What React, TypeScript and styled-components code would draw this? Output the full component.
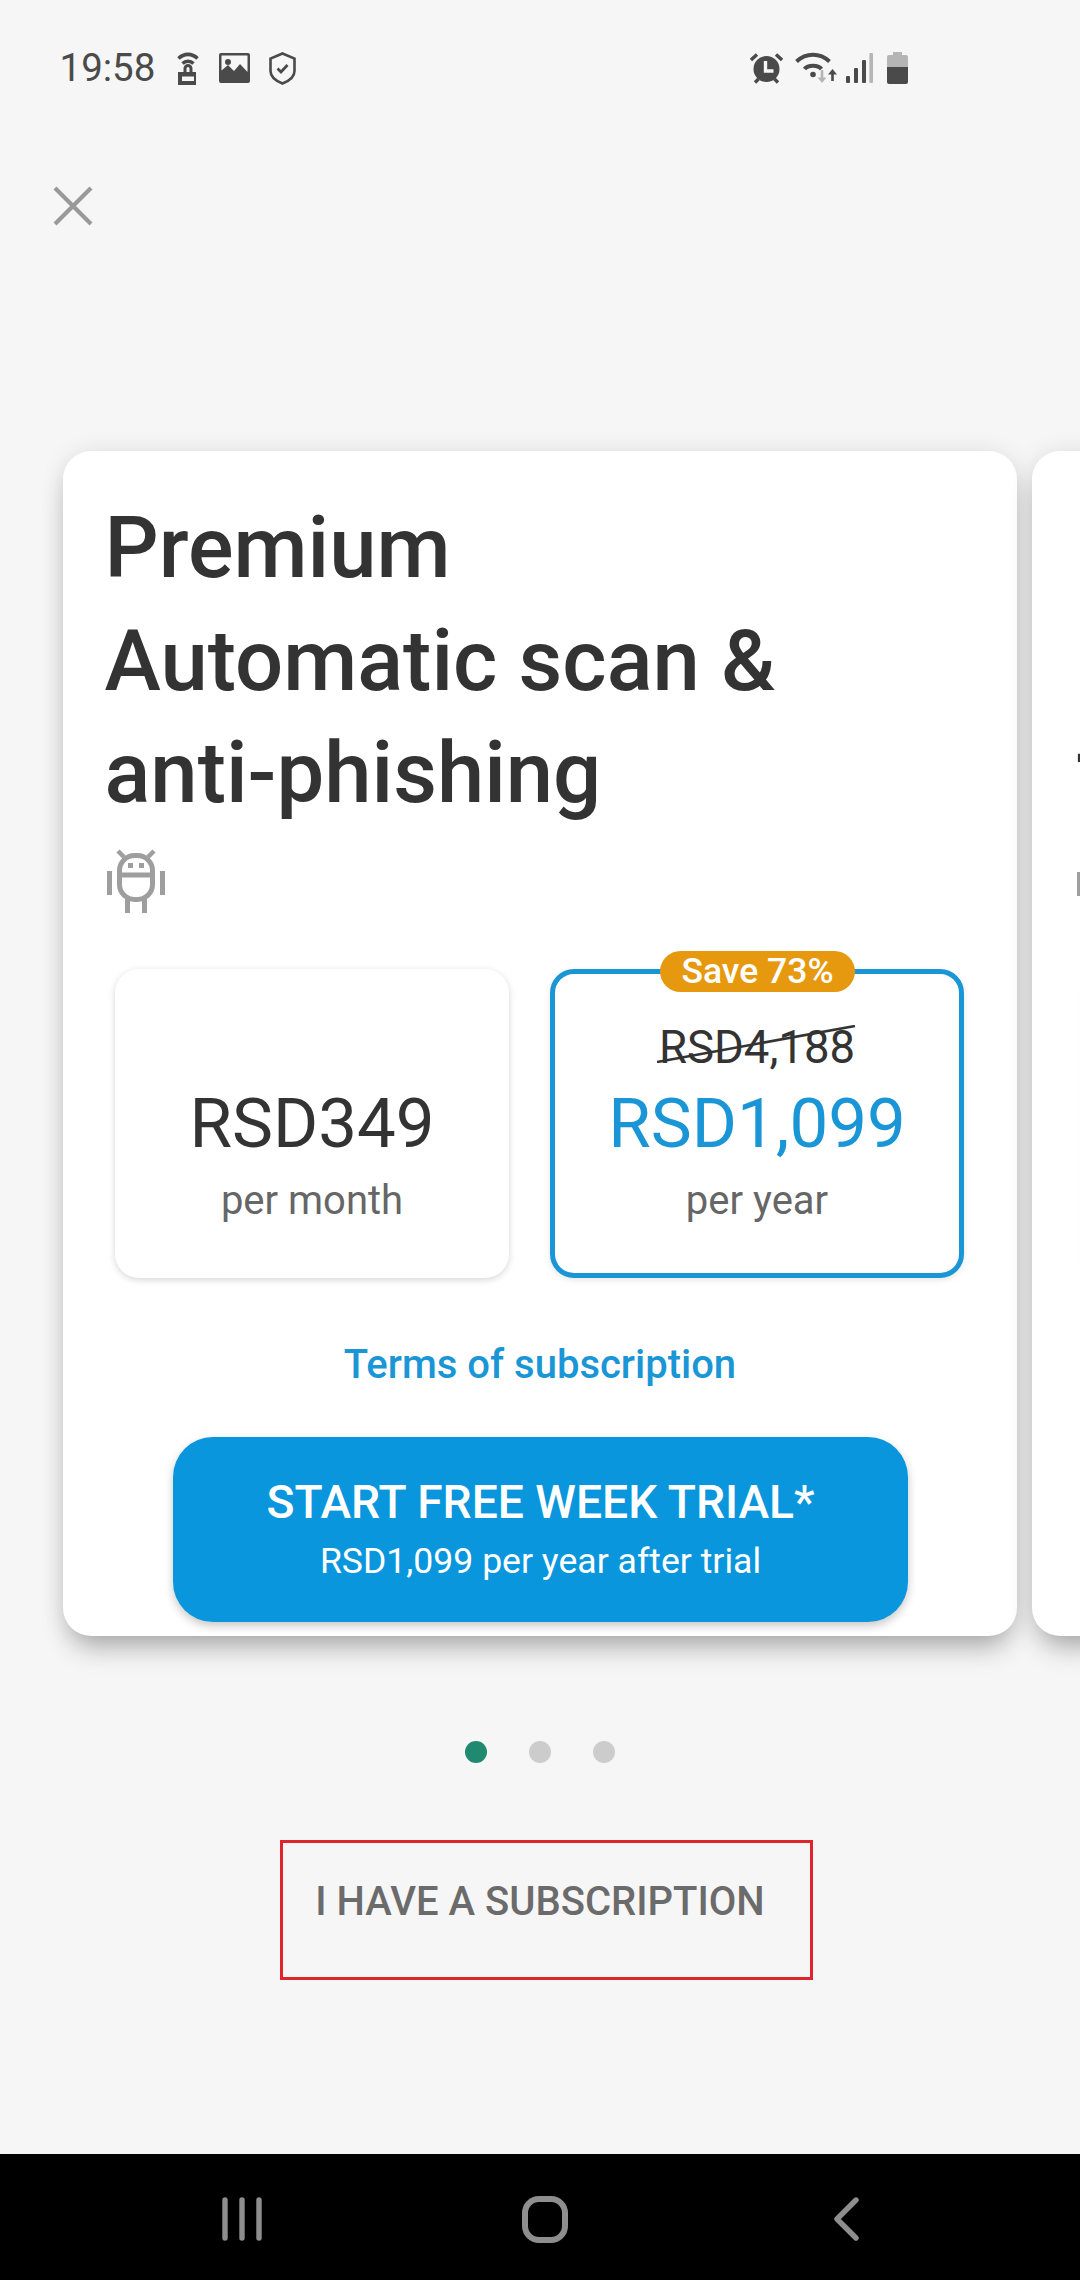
import styled, { createGlobalStyle } from "styled-components";

const GlobalStyle = createGlobalStyle`
  html, body {
    margin: 0;
    padding: 0;
    background: #f6f6f6;
  }
  * {
    box-sizing: border-box;
  }
`

const Screen = styled.div`
  position: relative;
  width: 1080px;
  height: 2280px;
  overflow: hidden;
  background: #f6f6f6;
  font-family: Roboto, "Liberation Sans", sans-serif;
  display: flex;
  flex-direction: column;
`

const StatusBar = styled.div`
  height: 136px;
  padding: 50px 172px 0 59.5px;
  display: flex;
  justify-content: space-between;
  align-items: flex-start;
`

const StatusGroup = styled.div<{ $gap: number }>`
  display: flex;
  align-items: center;
  gap: ${p => p.$gap}px;
  height: 36px;
`

const StatusSlot = styled.span<{ $after: number }>`
  display: flex;
  margin-right: ${p => p.$after}px;
`

const Time = styled.span`
  font-size: 38.5px;
  line-height: 36px;
  color: #4a4a4a;
  margin-right: 2px;
`

const CloseButton = styled.div`
  margin: 50px 0 0 53px;
  width: 40px;
  height: 40px;
  display: flex;
`

const Carousel = styled.div`
  margin-top: 225px;
  padding-left: 63px;
  display: flex;
  gap: 15px;
  width: 1080px;
`

const Card = styled.div`
  flex: none;
  width: 954px;
  height: 1185px;
  background: #fff;
  border-radius: 28px;
  box-shadow: 0 18px 28px -8px rgba(0, 0, 0, 0.3), 0 0 24px rgba(0, 0, 0, 0.09);
  padding: 41px 43px 0;
  display: flex;
  flex-direction: column;
`

const PeekCard = styled(Card)`
  padding: 278px 0 0 44px;
  overflow: hidden;
`

const Title = styled.h1`
  margin: 0 0 0 -1.5px;
  font-size: 85px;
  line-height: 112.5px;
  font-weight: 500;
  color: #333;
`

const PlatformIcon = styled.div`
  margin-top: 19px;
  height: 64px;
`

const PeekPlatformIcon = styled(PlatformIcon)`
  margin-top: 9px;
`

const Plans = styled.div`
  margin: 56px 10px 0 9px;
  display: flex;
  gap: 41px;
  align-items: stretch;
`

const Plan = styled.div<{ $selected?: boolean }>`
  position: relative;
  height: 309px;
  flex: ${p => (p.$selected ? "0 0 414px" : "0 0 394px")};
  border-radius: 24px;
  background: #fff;
  border: ${p => (p.$selected ? "5px solid #1a96d6" : "none")};
  box-shadow: ${p => (p.$selected ? "0 2px 6px rgba(0, 0, 0, 0.1)" : "0 2px 7px rgba(0, 0, 0, 0.16)")};
  display: flex;
  flex-direction: column;
  align-items: center;
  padding-top: ${p => (p.$selected ? "48px" : "111px")};
`

const Badge = styled.div`
  position: absolute;
  top: -23px;
  left: 105px;
  width: 195px;
  height: 41px;
  border-radius: 21px;
  background: #e6990f;
  color: #fff;
  font-size: 35.5px;
  font-weight: 500;
  line-height: 40px;
  text-align: center;
`

const OldPrice = styled.div`
  position: relative;
  margin-bottom: 6px;
  font-size: 45.5px;
  line-height: 52px;
  color: #333;
`

const StrikeLine = styled.svg`
  position: absolute;
  left: -2px;
  top: 3px;
`

const Price = styled.div<{ $accent?: boolean }>`
  margin-top: 3px;
  font-size: 69px;
  line-height: 81px;
  color: ${p => (p.$accent ? "#1a96d6" : "#333")};
`

const Period = styled.div`
  margin-top: 13px;
  font-size: 40px;
  line-height: 47px;
  color: #666;
`

const TermsLink = styled.div`
  margin-top: 63px;
  text-align: center;
  font-size: 40px;
  line-height: 47px;
  font-weight: 500;
  color: #1a96d6;
`

const TrialButton = styled.div`
  margin: 49px 66px 0 67px;
  height: 185px;
  border-radius: 40px;
  background: #0a96dc;
  box-shadow: 0 4px 10px rgba(0, 0, 0, 0.22);
  color: #fff;
  display: flex;
  flex-direction: column;
  align-items: center;
  padding-top: 39px;
`

const TrialTitle = styled.div`
  font-size: 46.2px;
  line-height: 53px;
  font-weight: 500;
`

const TrialNote = styled.div`
  margin-top: 12px;
  font-size: 35.6px;
  line-height: 41px;
`

const PeekLetter = styled.div`
  font-size: 85px;
  line-height: 112px;
  font-weight: 500;
  color: #333;
`

const Dots = styled.div`
  margin-top: 105px;
  display: flex;
  justify-content: center;
  gap: 42px;
`

const Dot = styled.div<{ $active?: boolean }>`
  width: 22px;
  height: 22px;
  border-radius: 50%;
  background: ${p => (p.$active ? "#1f8a70" : "#ccc")};
`

const RestoreLink = styled.div`
  margin-top: 116px;
  text-align: center;
  font-size: 40px;
  line-height: 46px;
  font-weight: 500;
  color: #6b6b6b;
`

const AnnotationBox = styled.div`
  position: absolute;
  left: 280px;
  top: 1840px;
  width: 533px;
  height: 140px;
  border: 3px solid #e0242f;
`

const NavBar = styled.div`
  margin-top: auto;
  height: 126px;
  background: #000;
  display: flex;
  align-items: center;
  padding: 4px 221px 0 221px;
  justify-content: space-between;
`

const HomeSlot = styled.div`
  display: flex;
  margin-right: 8px;
`

function HotspotIcon() {
  return (
    <svg width="24" height="34" viewBox="0 0 24 34" fill="none">
      <path d="M2.5 7.5C8 2 16 2 21.5 7.5" stroke="#4a4a4a" strokeWidth="3.6" />
      <path d="M6.5 12.5C9.5 9.5 14.5 9.5 17.5 12.5" stroke="#4a4a4a" strokeWidth="3.4" />
      <path fillRule="evenodd" d="M7.5 21v-3.5a4.5 4.5 0 0 1 9 0V21H20v13H2V21h5.5zm3 0h3v-3.5a1.5 1.5 0 0 0-3 0V21zM6 25.5v4.5h12v-4.5H6z" fill="#4a4a4a" />
    </svg>
  )
}

function ImageIcon() {
  return (
    <svg width="31" height="30" viewBox="0 0 31 30">
      <path fillRule="evenodd" d="M2 0h27a2 2 0 0 1 2 2v26a2 2 0 0 1-2 2H2a2 2 0 0 1-2-2V2a2 2 0 0 1 2-2zm.5 2.5v15L9 12l6 6 6-7 7.5 8V2.5h-26z" fill="#4a4a4a" />
      <circle cx="9" cy="9" r="3" fill="#4a4a4a" />
    </svg>
  )
}

function ShieldIcon() {
  return (
    <svg width="27" height="33" viewBox="0 0 27 33" fill="none">
      <path d="M13.5 1.5L25.5 6.5V19C25.5 25 20 29 13.5 31.5C7 29 1.5 25 1.5 19V6.5L13.5 1.5Z" stroke="#4a4a4a" strokeWidth="2.6" />
      <path d="M8.5 16.5L12 20L18.5 13" stroke="#4a4a4a" strokeWidth="2.8" />
    </svg>
  )
}

function AlarmIcon() {
  return (
    <svg width="33" height="31" viewBox="0 0 33 31">
      <circle cx="16.5" cy="16" r="13" fill="#4a4a4a" />
      <path d="M1 7L7 1.5M32 7L26 1.5M5 29.5l3.5-3.5M28 29.5L24.5 26" stroke="#4a4a4a" strokeWidth="3.4" />
      <path d="M15.5 8v10h8" stroke="#f6f6f6" strokeWidth="3.4" fill="none" />
    </svg>
  )
}

function WifiIcon() {
  return (
    <svg width="43" height="32" viewBox="0 0 43 32" fill="none">
      <path d="M1.5 9.5C11 0.5 25 0.5 34.5 9.5" stroke="#4a4a4a" strokeWidth="4" />
      <path d="M9.5 17C13 12.5 23 12.5 26.5 17" stroke="#4a4a4a" strokeWidth="4" />
      <circle cx="18" cy="22.5" r="2.8" fill="#4a4a4a" />
      <path d="M27 18v11" stroke="#b5b5b5" strokeWidth="2.6" />
      <path d="M22.5 25.5L27 31l4.5-5.5z" fill="#b5b5b5" />
      <path d="M37.5 19v10" stroke="#4a4a4a" strokeWidth="2.6" />
      <path d="M33 22.5L37.5 17l4.5 5.5z" fill="#4a4a4a" />
    </svg>
  )
}

function SignalIcon() {
  return (
    <svg width="27" height="30" viewBox="0 0 27 30">
      <rect x="0" y="23" width="4" height="7" rx="1" fill="#4a4a4a" />
      <rect x="8" y="15" width="4" height="15" rx="1" fill="#4a4a4a" />
      <rect x="16" y="7" width="4" height="23" rx="1" fill="#4a4a4a" />
      <rect x="23.4" y="0" width="3.6" height="30" rx="1" fill="#b5b5b5" />
    </svg>
  )
}

function BatteryIcon() {
  return (
    <svg width="21" height="32" viewBox="0 0 21 32">
      <path d="M6 0h9v3h4a2 2 0 0 1 2 2v10H0V5a2 2 0 0 1 2-2h4z" fill="#b5b5b5" />
      <path d="M0 15h21v15a2 2 0 0 1-2 2H2a2 2 0 0 1-2-2z" fill="#4a4a4a" />
    </svg>
  )
}

function CloseIcon() {
  return (
    <svg width="40" height="40" viewBox="0 0 40 40" fill="none">
      <path d="M2 2L38 38M38 2L2 38" stroke="#999" strokeWidth="4.2" />
    </svg>
  )
}

function AndroidIcon() {
  return (
    <svg width="60" height="64" viewBox="0 0 58 64" fill="none" stroke="#9e9e9e">
      <rect x="12.5" y="6.5" width="33" height="44" rx="15" strokeWidth="5" />
      <path d="M12.5 26h33" strokeWidth="5" />
      <path d="M11 2l6 6M47 2l-6 6" strokeWidth="4.5" />
      <path d="M2.5 22v24M55.5 22v24" strokeWidth="5" />
      <path d="M20.5 50v14M37.5 50v14" strokeWidth="5" />
      <rect x="21" y="14" width="5" height="5" fill="#9e9e9e" stroke="none" />
      <rect x="32" y="14" width="5" height="5" fill="#9e9e9e" stroke="none" />
    </svg>
  )
}

function RecentsIcon() {
  return (
    <svg width="42" height="44" viewBox="0 0 42 44" fill="none" stroke="#8e8e8e" strokeWidth="5.4" strokeLinecap="round">
      <path d="M4 3v38M21 3v38M38 3v38" />
    </svg>
  )
}

function HomeIcon() {
  return (
    <svg width="46" height="47" viewBox="0 0 46 47" fill="none">
      <rect x="3" y="3" width="40" height="41" rx="14" stroke="#8e8e8e" strokeWidth="6" />
    </svg>
  )
}

function BackIcon() {
  return (
    <svg width="25" height="44" viewBox="0 0 25 44" fill="none">
      <path d="M22 3L3 22L22 41" stroke="#8e8e8e" strokeWidth="5.4" strokeLinecap="round" strokeLinejoin="round" />
    </svg>
  )
}

export default function App() {
  return (
    <Screen>
      <GlobalStyle />
      <StatusBar>
        <StatusGroup $gap={19}>
          <Time>19:58</Time>
          <HotspotIcon />
          <ImageIcon />
          <ShieldIcon />
        </StatusGroup>
        <StatusGroup $gap={8}>
          <StatusSlot $after={4}>
            <AlarmIcon />
          </StatusSlot>
          <WifiIcon />
          <StatusSlot $after={6}>
            <SignalIcon />
          </StatusSlot>
          <BatteryIcon />
        </StatusGroup>
      </StatusBar>
      <CloseButton>
        <CloseIcon />
      </CloseButton>
      <Carousel>
        <Card>
          <Title>
            Premium
            <br />
            Automatic scan &amp;
            <br />
            anti-phishing
          </Title>
          <PlatformIcon>
            <AndroidIcon />
          </PlatformIcon>
          <Plans>
            <Plan>
              <Price>RSD349</Price>
              <Period>per month</Period>
            </Plan>
            <Plan $selected>
              <Badge>Save 73%</Badge>
              <OldPrice>
                RSD4,188
                <StrikeLine width="200" height="38" viewBox="0 0 200 38">
                  <path d="M0 37L198 1" stroke="#333" strokeWidth="2.6" />
                </StrikeLine>
              </OldPrice>
              <Price $accent>RSD1,099</Price>
              <Period>per year</Period>
            </Plan>
          </Plans>
          <TermsLink>Terms of subscription</TermsLink>
          <TrialButton>
            <TrialTitle>START FREE WEEK TRIAL*</TrialTitle>
            <TrialNote>RSD1,099 per year after trial</TrialNote>
          </TrialButton>
        </Card>
        <PeekCard>
          <PeekLetter>T</PeekLetter>
          <PeekPlatformIcon>
            <AndroidIcon />
          </PeekPlatformIcon>
          <Plans>
            <Plan />
          </Plans>
        </PeekCard>
      </Carousel>
      <Dots>
        <Dot $active />
        <Dot />
        <Dot />
      </Dots>
      <RestoreLink>I HAVE A SUBSCRIPTION</RestoreLink>
      <AnnotationBox />
      <NavBar>
        <RecentsIcon />
        <HomeSlot>
          <HomeIcon />
        </HomeSlot>
        <BackIcon />
      </NavBar>
    </Screen>
  )
}
